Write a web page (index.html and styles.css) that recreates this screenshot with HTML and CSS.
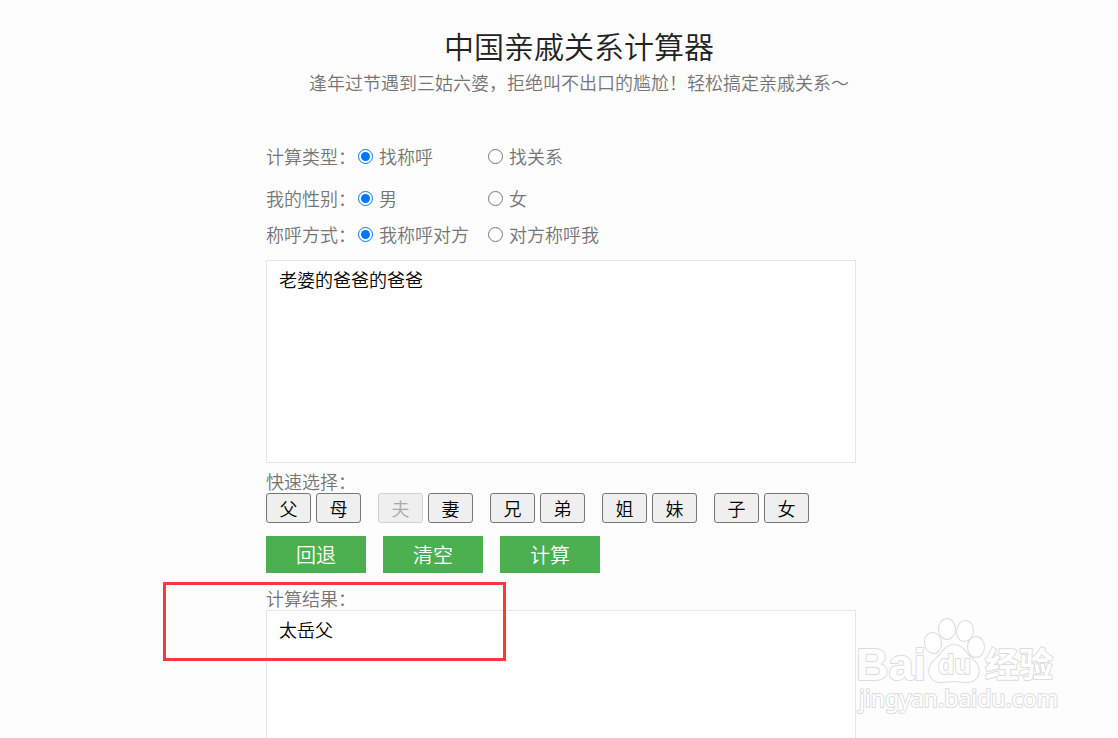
FILE: index.html
```
<!DOCTYPE html>
<html lang="zh-CN">
<head>
    <meta charset="UTF-8">
    <meta name="viewport" content="width=device-width, initial-scale=1.0">
    <title>中国亲戚关系计算器</title>
    <link rel="stylesheet" href="styles.css">
</head>
<body>

    <div class="container">
        <header class="header">
            <h1>中国亲戚关系计算器</h1>
            <p>逢年过节遇到三姑六婆，拒绝叫不出口的尴尬！轻松搞定亲戚关系～</p>
        </header>

        <form id="relationForm">
            <div class="options">
                <div class="option-row type-row" role="radiogroup" aria-labelledby="typeLabel">
                    <span id="typeLabel">计算类型：</span>
                    <label><input type="radio" name="type" value="call" checked>找称呼</label>
                    <label><input type="radio" name="type" value="relation">找关系</label>
                </div>
                <div class="option-row" role="radiogroup" aria-labelledby="sexLabel">
                    <span id="sexLabel">我的性别：</span>
                    <label><input type="radio" name="sex" value="1" checked>男</label>
                    <label><input type="radio" name="sex" value="0">女</label>
                </div>
                <div class="option-row" role="radiogroup" aria-labelledby="modeLabel">
                    <span id="modeLabel">称呼方式：</span>
                    <label><input type="radio" name="mode" value="me" checked>我称呼对方</label>
                    <label><input type="radio" name="mode" value="other">对方称呼我</label>
                </div>
            </div>

            <textarea class="text-box" id="relation" aria-label="亲戚关系">老婆的爸爸的爸爸</textarea>

            <div class="field-label" id="quickLabel">快速选择：</div>
            <div class="quick" role="group" aria-labelledby="quickLabel">
                <div class="pair">
                    <button type="button">父</button>
                    <button type="button">母</button>
                </div>
                <div class="pair">
                    <button type="button" disabled>夫</button>
                    <button type="button">妻</button>
                </div>
                <div class="pair">
                    <button type="button">兄</button>
                    <button type="button">弟</button>
                </div>
                <div class="pair">
                    <button type="button">姐</button>
                    <button type="button">妹</button>
                </div>
                <div class="pair">
                    <button type="button">子</button>
                    <button type="button">女</button>
                </div>
            </div>

            <div class="actions">
                <button type="button">回退</button>
                <button type="button">清空</button>
                <button type="button">计算</button>
            </div>

            <div class="result">
                <label class="field-label" for="result">计算结果：</label>
                <textarea class="text-box" id="result" readonly>太岳父</textarea>
                <div class="highlight"></div>
            </div>
        </form>
    </div>

    <svg class="watermark" width="210" height="110" viewBox="0 0 210 110" role="img" aria-label="Baidu 经验">
        <g>
            <ellipse cx="79" cy="31" rx="8" ry="10" transform="rotate(-6 79 31)"/>
            <ellipse cx="93" cy="17" rx="8" ry="10"/>
            <ellipse cx="111" cy="19" rx="8" ry="10" transform="rotate(10 111 19)"/>
            <ellipse cx="122" cy="35" rx="8" ry="10"/>
            <path d="M100 33C91 33 88 42 82 47C76 52 73 58 77 65C82 73 92 69 100 69C108 69 117 73 123 65C127 58 124 52 118 47C112 42 109 33 100 33Z"/>
        </g>
        <text class="mark-bai" x="2" y="68">Bai</text>
        <text class="mark-du" x="84" y="62">du</text>
        <text class="mark-cn" x="131" y="65">经验</text>
        <text class="mark-url" x="5" y="95">jingyan.baidu.com</text>
    </svg>

</body>
</html>
```
FILE: styles.css
```
* {
    box-sizing: border-box;
}

body {
    margin: 0;
    padding: 0 0 0 40px;
    position: relative;
    height: 100vh;
    overflow: hidden;
    background-color: #fdfdfd;
    color: #757575;
    font-family: "Noto Sans CJK SC", sans-serif;
    font-size: 18px;
    font-weight: 350;
    line-height: 26px;
}

.container {
    max-width: 626px;
    margin: 0 auto;
    padding-top: 25px;
}

.header {
    text-align: center;
}

h1 {
    margin: 0;
    color: #222;
    font-size: 30px;
    font-weight: 350;
    line-height: 40px;
}

.header p {
    margin: 4px 0 0;
    white-space: nowrap;
}

.options {
    margin: 48px 0 8px;
}

.option-row {
    display: grid;
    grid-template-columns: 92px 130px auto;
    height: 36px;
    align-items: center;
}

.type-row {
    height: 26px;
    margin-bottom: 11px;
}

.option-row span,
.option-row label {
    white-space: nowrap;
}

.option-row label {
    display: flex;
    align-items: center;
    gap: 6px;
}

.option-row input {
    width: 15px;
    height: 15px;
    margin: 0;
}

.text-box {
    display: block;
    width: 100%;
    max-width: 590px;
    height: 203px;
    padding: 5px 12px;
    border: 1px solid #e6e6e6;
    background-color: #fff;
    color: #000;
    font: inherit;
    resize: none;
    outline: none;
}

.field-label {
    display: block;
    margin-top: 6px;
    line-height: 24px;
}

.quick {
    display: flex;
    gap: 17px;
}

.pair {
    display: flex;
    gap: 5px;
}

.quick button {
    width: 45px;
    height: 30px;
    padding: 0;
    border: 1px solid #767676;
    border-radius: 3px;
    background-color: #efefef;
    color: #000;
    font: inherit;
}

.quick button:disabled {
    border-color: #d0d0d0;
    color: #aaa;
}

.actions {
    display: flex;
    gap: 17px;
    margin-top: 13px;
}

.actions button {
    width: 100px;
    height: 37px;
    padding: 0;
    border: none;
    background-color: #4caf50;
    color: #fff;
    font: inherit;
    font-size: 20px;
    cursor: pointer;
}

.result {
    position: relative;
    margin-top: 13px;
}

.result .field-label {
    margin-top: 0;
}

/* red frame around the result */
.highlight {
    position: absolute;
    top: -4px;
    left: -103px;
    width: 343px;
    height: 79px;
    border: 3px solid #fb3737;
    pointer-events: none;
}

.watermark {
    position: absolute;
    right: 54px;
    bottom: 16px;
    fill: #fff;
    stroke: #dcdcdc;
    stroke-width: 2;
    stroke-linejoin: round;
    paint-order: stroke;
    font-family: "Liberation Sans", sans-serif;
    pointer-events: none;
}

.mark-bai {
    font-size: 45px;
    font-weight: 700;
}

.mark-du {
    font-size: 27px;
    font-weight: 700;
}

.mark-cn {
    font-family: "Noto Sans CJK SC", sans-serif;
    font-size: 34px;
    font-weight: 700;
}

.mark-url {
    font-family: "Noto Sans", sans-serif;
    font-size: 23px;
    font-weight: 400;
}
```
